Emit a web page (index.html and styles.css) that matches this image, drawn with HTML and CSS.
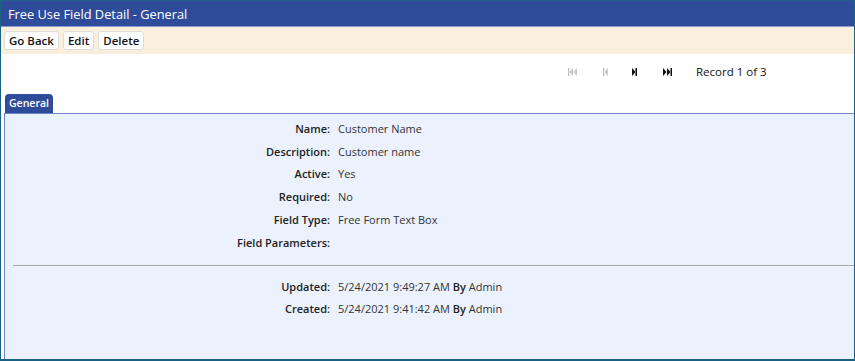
FILE: index.html
```
<!doctype html>
<html>
<head>
<meta charset="utf-8">
<link rel="stylesheet" href="styles.css">
<title>Free Use Field Detail - General</title>
</head>
<body>
<div class="frame">
  <div class="titlebar">Free Use Field Detail - General</div>

  <div class="toolbar">
    <button class="btn">Go Back</button>
    <button class="btn">Edit</button>
    <button class="btn">Delete</button>
  </div>

  <div class="pager">
    <span class="pg off first">
      <svg width="9" height="8" viewBox="0 0 9 8"><rect x="0" y="0" width="1.5" height="8"/><path d="M5 0v8L1.5 4z M9 0v8L5.5 4z"/></svg>
    </span>
    <span class="pg off prev">
      <svg width="5" height="8" viewBox="0 0 5 8"><rect x="0" y="0" width="1.5" height="8"/><path d="M5 0v8L1.5 4z"/></svg>
    </span>
    <span class="pg next">
      <svg width="5" height="8" viewBox="0 0 5 8"><path d="M0 0v8L3.5 4z"/><rect x="3.5" y="0" width="1.5" height="8"/></svg>
    </span>
    <span class="pg last">
      <svg width="9" height="8" viewBox="0 0 9 8"><path d="M0 0v8L3.5 4z M4 0v8L7.5 4z"/><rect x="7.5" y="0" width="1.5" height="8"/></svg>
    </span>
    <span class="record">Record 1 of 3</span>
  </div>

  <div class="tabs"><span class="tab">General</span></div>

  <div class="panel">
    <div class="fields">
      <div class="lbl">Name:</div><div class="val">Customer Name</div>
      <div class="lbl">Description:</div><div class="val">Customer name</div>
      <div class="lbl">Active:</div><div class="val">Yes</div>
      <div class="lbl">Required:</div><div class="val">No</div>
      <div class="lbl">Field Type:</div><div class="val">Free Form Text Box</div>
      <div class="lbl">Field Parameters:</div><div class="val"></div>
    </div>
    <hr class="sep">
    <div class="fields">
      <div class="lbl">Updated:</div><div class="val">5/24/2021 9:49:27 AM <b>By</b> Admin</div>
      <div class="lbl">Created:</div><div class="val">5/24/2021 9:41:42 AM <b>By</b> Admin</div>
    </div>
  </div>
</div>
</body>
</html>
```

FILE: styles.css
```
html,
body {
    margin: 0;
    padding: 0;
    background: #fff;
}
body {
    font-family: "Open Sans", "Noto Sans", Arial, sans-serif;
    font-size: 11px;
    color: #222;
}
.frame {
    height: 358px;
    border: 1px solid #1b6185;
    border-bottom-width: 2px;
    display: flex;
    flex-direction: column;
}
.titlebar {
    height: 26px;
    line-height: 26px;
    padding-left: 7px;
    background: #2f4c9a;
    color: #fff;
    font-size: 12.8px;
    border-bottom: 1px solid #8c9ccc;
    box-sizing: border-box;
}
.toolbar {
    height: 27px;
    background: #faefdc;
    display: flex;
    align-items: center;
    gap: 4px;
    padding-left: 3px;
}
.btn {
    font-family: inherit;
    font-size: 11.5px;
    font-weight: 600;
    color: #111;
    background: #fff;
    border: 1px solid #ddd;
    border-radius: 3px;
    height: 19px;
    padding: 0 4px;
    line-height: 17px;
}
.pager {
    height: 35px;
    display: flex;
    align-items: center;
    padding-left: 567px;
    color: #111;
}
.pg {
    display: flex;
    align-items: center;
}
.pg svg {
    fill: #111;
}
.pg.off svg {
    fill: #c8c8c8;
}
.first {
    width: 35px;
}
.prev {
    width: 29px;
}
.next {
    width: 31px;
}
.last {
    width: 33px;
}
.record {
    font-size: 11.5px;
}
.tabs {
    padding-left: 4px;
    height: 24px;
    display: flex;
    align-items: flex-end;
}
.tab {
    background: #2f4c9a;
    color: #fff;
    font-size: 10.5px;
    font-weight: 600;
    padding: 0 4px;
    height: 19px;
    line-height: 19px;
    border-radius: 4px 4px 0 0;
}
.panel {
    flex: 1;
    margin-left: 3px;
    background: #ecf2fd;
    border-left: 1px solid #6a86c8;
    border-top: 1px solid #6a86c8;
    padding-top: 3px;
}
.fields {
    display: grid;
    grid-template-columns: 325px 1fr;
    column-gap: 8px;
    grid-auto-rows: 22.8px;
    align-items: center;
}
.lbl {
    text-align: right;
    font-weight: 600;
}
.val {
    color: #333;
}
.val b {
    font-weight: 600;
    color: #222;
}
.sep {
    margin: 11px 0 9px 8px;
    border: 0;
    border-top: 1px solid #aaa;
}
```
